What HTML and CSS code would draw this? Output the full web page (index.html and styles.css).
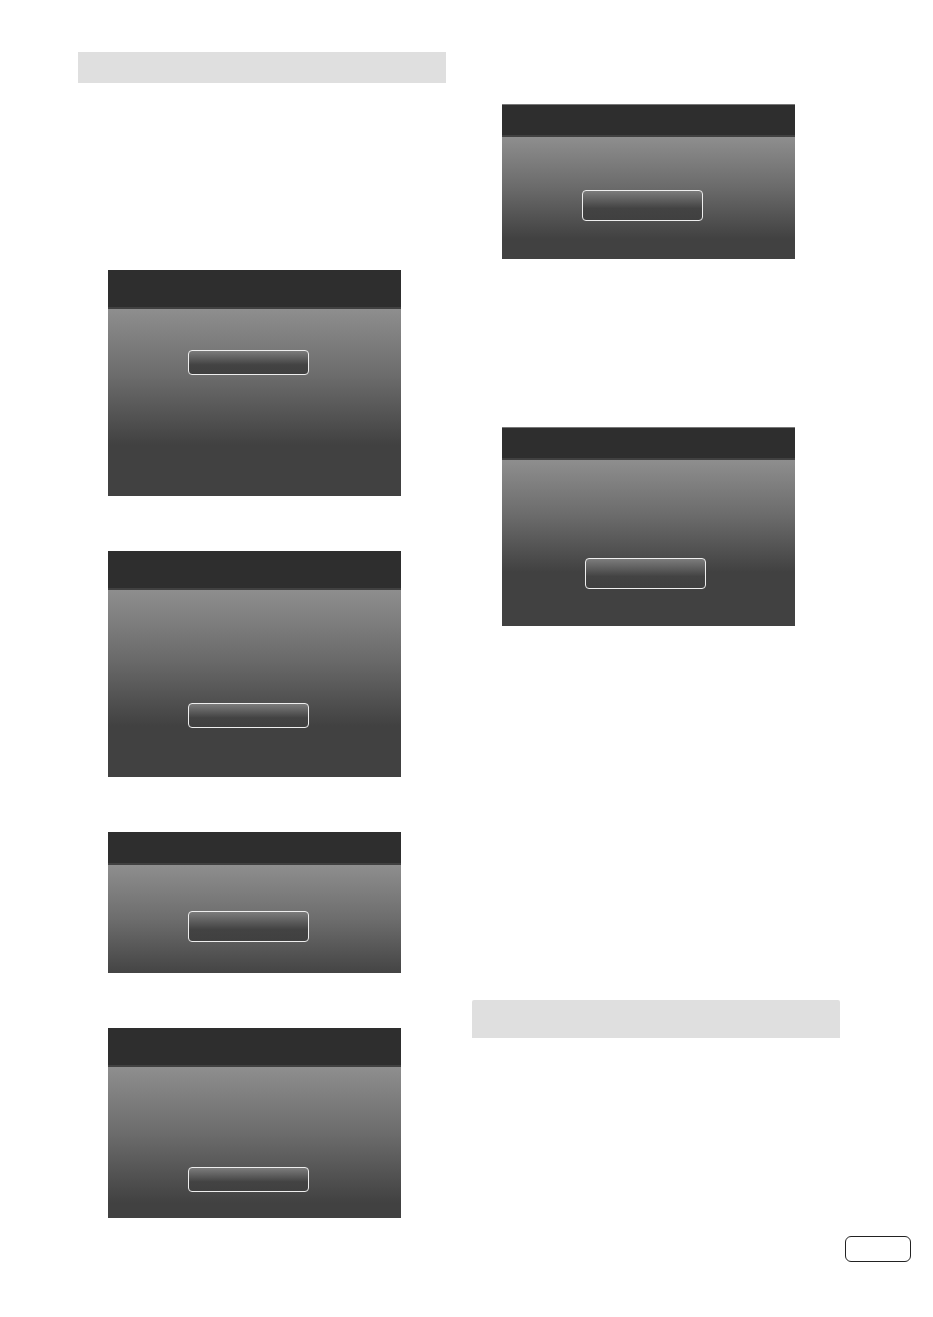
FILE: index.html
```html
<!DOCTYPE html>
<html lang="en">
<head>
    <meta charset="UTF-8">
    <meta name="viewport" content="width=device-width, initial-scale=1.0">
    <title>Manual Page</title>
    <link rel="stylesheet" href="styles.css">
</head>
<body>
    <main class="columns">
        <div class="column">
            <div class="section-bar"></div>
            <div class="panels">
                <div class="panel">
                    <div class="panel-header tall"></div>
                    <div class="panel-body body-menu">
                        <button type="button" class="button" aria-label="Select"></button>
                    </div>
                </div>
                <div class="panel">
                    <div class="panel-header tall"></div>
                    <div class="panel-body body-list">
                        <button type="button" class="button" aria-label="Select"></button>
                    </div>
                </div>
                <div class="panel">
                    <div class="panel-header"></div>
                    <div class="panel-body body-short">
                        <button type="button" class="button large" aria-label="Select"></button>
                    </div>
                </div>
                <div class="panel">
                    <div class="panel-header tall"></div>
                    <div class="panel-body body-medium">
                        <button type="button" class="button" aria-label="Select"></button>
                    </div>
                </div>
            </div>
        </div>

        <div class="column">
            <div class="panels panels-right">
                <div class="panel edge">
                    <div class="panel-header"></div>
                    <div class="panel-body body-confirm">
                        <button type="button" class="button large" aria-label="Select"></button>
                    </div>
                </div>
                <div class="panel edge">
                    <div class="panel-header"></div>
                    <div class="panel-body body-message">
                        <button type="button" class="button large" aria-label="Select"></button>
                    </div>
                </div>
            </div>
            <div class="section-bar thick"></div>
        </div>
    </main>

    <footer class="footer">
        <div class="page-number"></div>
    </footer>
</body>
</html>
```
FILE: styles.css
```css
* {
    box-sizing: border-box;
}

body {
    margin: 0;
    font-family: Arial, "Liberation Sans", sans-serif;
    background: #fff;
}

.columns {
    display: grid;
    grid-template-columns: 1fr 1fr;
    gap: 26px;
    padding: 52px 93px 0 78px;
}

.section-bar {
    height: 31px;
    background: #dfdfdf;
}

.section-bar.thick {
    height: 38px;
    margin-top: 374px;
    border-radius: 2px 2px 0 0;
}

.panels {
    display: flex;
    flex-direction: column;
    gap: 55px;
    padding: 187px 45px 0 30px;
}

.panels-right {
    gap: 168px;
    padding-top: 52px;
}

.panel-header {
    height: 33px;
    background: #2e2e2e;
    border-bottom: 2px solid #414141;
}

.panel-header.tall {
    height: 39px;
}

.edge .panel-header {
    border-top: 1px solid #777;
}

.panel-body {
    display: flex;
    padding-left: 80px;
    background: linear-gradient(#8e8e8e, #6b6b6b 68px, #414141 136px);
}

.body-menu {
    padding-top: 41px;
    padding-bottom: 121px;
}

.body-list {
    padding-top: 113px;
    padding-bottom: 49px;
}

.body-short {
    padding-top: 46px;
    padding-bottom: 31px;
    background: linear-gradient(#8e8e8e, #6d6d6d 50%, #444);
}

.body-medium {
    padding-top: 100px;
    padding-bottom: 26px;
}

.body-confirm {
    padding-top: 53px;
    padding-bottom: 38px;
    background: linear-gradient(#8e8e8e, #6b6b6b 50px, #414141 102px);
}

.body-message {
    padding-top: 98px;
    padding-bottom: 37px;
    padding-left: 83px;
    background: linear-gradient(#8e8e8e, #6b6b6b 56px, #414141 112px);
}

.button {
    width: 121px;
    height: 25px;
    padding: 0;
    border: 1px solid #eee;
    border-radius: 4px;
    background: linear-gradient(#7c7c7c, #434343 60%, #404040);
    cursor: pointer;
}

.button.large {
    height: 31px;
}

.footer {
    display: flex;
    justify-content: flex-end;
    padding: 18px 22px 55px;
}

.page-number {
    width: 66px;
    height: 26px;
    border: 1px solid #222;
    border-radius: 6px;
}
```
